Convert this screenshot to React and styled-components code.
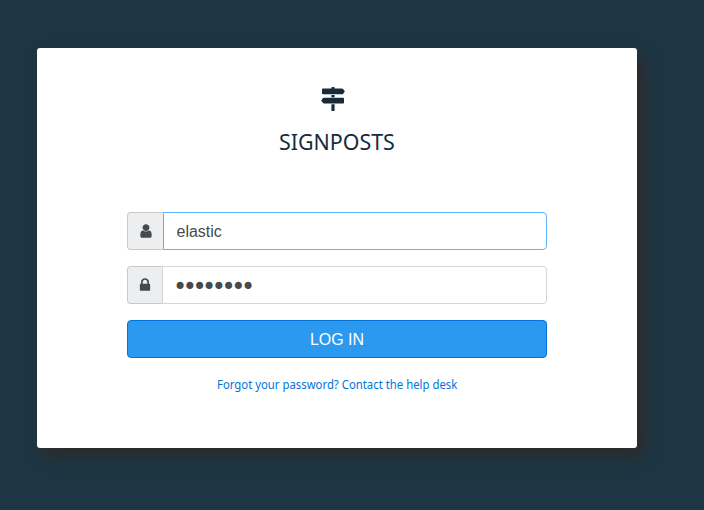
import React from 'react';
import styled, { createGlobalStyle } from 'styled-components';

const GlobalStyle = createGlobalStyle`
  * { box-sizing: border-box; }
  body { margin: 0; background: #1e3644; }
`;
const Page = styled.main`
  height: 510px;
  padding: 48px 67px 0 37px;
  overflow: hidden;
  background: #1e3644;
  font-family: "Noto Sans", sans-serif;
`;
const Card = styled.section`
  height: 400px;
  padding: 38px 90px 0;
  display: flex;
  flex-direction: column;
  background: #fff;
  border-radius: 3px;
  box-shadow: 6px 8px 16px #2c2a28;
`;
const Brand = styled.header`
  height: 126px;
  display: flex;
  flex-direction: column;
  align-items: center;
  color: #172b3a;
`;
const Logo = styled.svg`
  width: 26px;
  height: 26px;
  margin-left: -8px;
  fill: currentColor;
`;
const Title = styled.h1`
  margin: 14px 0 0;
  font-size: 22.5px;
  line-height: 32px;
  font-weight: 400;
  transform: scaleX(0.95);
`;
const Form = styled.form`
  display: flex;
  flex-direction: column;
  gap: 16px;
`;
const Field = styled.label`
  height: 38px;
  display: flex;
`;
const Addon = styled.span`
  width: ${({ $width }) => $width}px;
  display: grid;
  place-items: center;
  color: #464a4c;
  background: #eceeef;
  border: 1px solid #c9cacb;
  border-right: 0;
  border-radius: 4px 0 0 4px;
`;
const Glyph = styled.svg`
  width: 16px;
  height: 16px;
  fill: currentColor;
`;
const Input = styled.input`
  flex: 1;
  min-width: 0;
  padding: 2px 12px 0 12.5px;
  color: #464a4c;
  font: 16px "Liberation Sans", Arial, sans-serif;
  background: #fff;
  border: 1px solid ${({ $active }) => ($active ? '#5cb3fd' : '#d5d5d5')};
  border-radius: 0 4px 4px 0;
  outline: 0;
`;
const PasswordInput = styled(Input)`
  padding: 3px 9.5px 0 10px;
  font: 24px "DejaVu Sans", sans-serif;
  letter-spacing: -4.45px;
`;
const Button = styled.button`
  height: 38px;
  padding: 2px 0 0;
  color: #fff;
  font: 16px "Liberation Sans", Arial, sans-serif;
  background: #2b99f0;
  border: 1px solid #0275d8;
  border-radius: 4px;
`;
const Help = styled.a`
  margin-top: 18px;
  align-self: center;
  color: #0275d8;
  font-size: 12px;
  line-height: 18px;
  white-space: nowrap;
  transform: scaleX(0.945);
`;

const SignsIcon = () => (
  <Logo viewBox="0 0 26 26">
    <path d="M11.4 2.6V1.8q0-.8.8-.8h1.6q.8 0 .8.8v.8h7.5q.5 0 .9.4l1.6 2q.4.4 0 .8L23 7.9q-.4.4-.9.4H3q-1 0-1-1V3.6q0-1 1-1zM11.4 9h3.2v2.2h-3.2zM3.9 11.7H23q1 0 1 1v3.8q0 1-1 1H3.9q-.5 0-.9-.4L1.4 15q-.4-.4 0-.8L3 12.1q.4-.4.9-.4zM11.4 18.2h3.2v6q0 .8-.8.8h-1.6q-.8 0-.8-.8z" />
  </Logo>
);
const UserIcon = () => (
  <Glyph viewBox="0 0 1792 1792">
    <path d="M1536 1399q0 109-62.5 187t-150.5 78h-854q-88 0-150.5-78t-62.5-187q0-85 8.5-160.5t31.5-152 58.5-131 94-89 134.5-34.5q131 128 313 128t313-128q76 0 134.5 34.5t94 89 58.5 131 31.5 152 8.5 160.5zm-256-887q0 159-112.5 271.5t-271.5 112.5-271.5-112.5-112.5-271.5 112.5-271.5 271.5-112.5 271.5 112.5 112.5 271.5z" />
  </Glyph>
);
const LockIcon = () => (
  <Glyph viewBox="0 0 1792 1792">
    <path d="M640 768h512v-192q0-106-75-181t-181-75-181 75-75 181v192zm832 96v576q0 40-28 68t-68 28h-960q-40 0-68-28t-28-68v-576q0-40 28-68t68-28h32v-192q0-184 132-316t316-132 316 132 132 316v192h32q40 0 68 28t28 68z" />
  </Glyph>
);

export default function App() {
  return (
    <Page>
      <GlobalStyle />
      <Card>
        <Brand><SignsIcon /><Title>SIGNPOSTS</Title></Brand>
        <Form>
          <Field><Addon $width={36}><UserIcon /></Addon><Input $active defaultValue="elastic" /></Field>
          <Field><Addon $width={35}><LockIcon /></Addon><PasswordInput type="password" defaultValue="password" /></Field>
          <Button type="button">LOG IN</Button>
        </Form>
        <Help>Forgot your password? Contact the help desk</Help>
      </Card>
    </Page>
  );
}
